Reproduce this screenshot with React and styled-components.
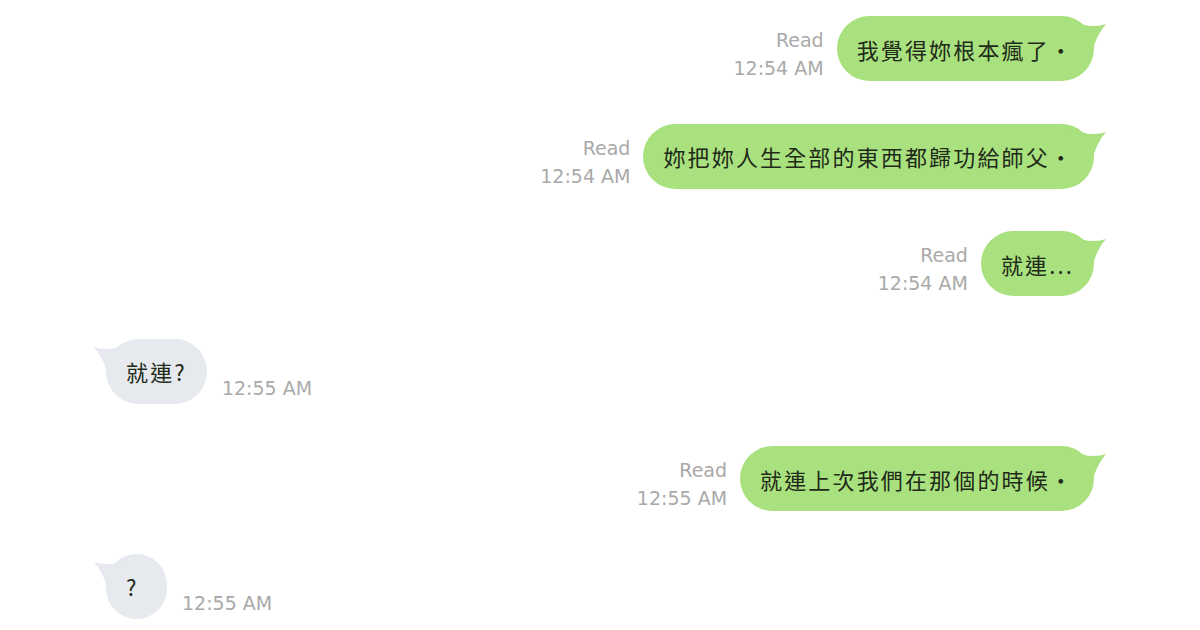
import React from "react";
import styled, { createGlobalStyle } from "styled-components";

const GlobalStyle = createGlobalStyle`
  html, body {
    margin: 0;
    padding: 0;
    background: #ffffff;
  }
  body {
    font-family: "Noto Sans CJK TC", "Noto Sans", sans-serif;
  }
`;

const messages = [
  { me: true, text: "我覺得妳根本瘋了・", time: "12:54 AM" },
  { me: true, text: "妳把妳人生全部的東西都歸功給師父・", time: "12:54 AM" },
  { me: true, text: "就連...", time: "12:54 AM" },
  { me: false, text: "就連?", time: "12:55 AM" },
  { me: true, text: "就連上次我們在那個的時候・", time: "12:55 AM" },
  { me: false, text: "?", time: "12:55 AM" },
];

function Tail({ color, flip }) {
  return (
    <TailSvg $flip={flip} width="44" height="40" viewBox="0 0 44 40">
      <path d="M2 1 Q 24 12 40 6 Q 30 17 25 38 L 2 38 Z" fill={color} />
    </TailSvg>
  );
}

export default function App() {
  return (
    <>
      <GlobalStyle />
      <Chat>
        {messages.map((m, i) => (
          <Row key={i} $me={m.me}>
            {m.me && (
              <Meta>
                <span>Read</span>
                <span>{m.time}</span>
              </Meta>
            )}
            <Bubble $me={m.me}>
              <Tail color={m.me ? "#a9e17f" : "#e6e9ee"} flip={!m.me} />
              <BubbleText>{m.text}</BubbleText>
            </Bubble>
            {!m.me && <Stamp>{m.time}</Stamp>}
          </Row>
        ))}
      </Chat>
    </>
  );
}

const Chat = styled.div`
  width: 1200px;
  height: 630px;
  box-sizing: border-box;
  padding: 16px 106px 0 106px;
  display: flex;
  flex-direction: column;
  gap: 42.6px;
  overflow: hidden;
`;

const Row = styled.div`
  display: flex;
  justify-content: ${(p) => (p.$me ? "flex-end" : "flex-start")};
  align-items: flex-end;
  gap: ${(p) => (p.$me ? "13px" : "15px")};
`;

const Meta = styled.div`
  display: flex;
  flex-direction: column;
  align-items: flex-end;
  font-family: "DejaVu Sans", "Liberation Sans", sans-serif;
  font-size: 19px;
  line-height: 28px;
  color: #a9a9a9;
  margin-bottom: -1px;
`;

const Stamp = styled.div`
  font-family: "DejaVu Sans", "Liberation Sans", sans-serif;
  font-size: 19px;
  line-height: 28px;
  color: #a9a9a9;
  margin-bottom: 2px;
`;

const Bubble = styled.div`
  position: relative;
  height: 65px;
  min-width: 61px;
  box-sizing: border-box;
  padding: 0 20px 0 20px;
  border-radius: 33px;
  background: ${(p) => (p.$me ? "#a9e17f" : "#e6e9ee")};
  display: flex;
  align-items: center;
  svg {
    ${(p) => (p.$me ? "right: -16px;" : "left: -16px;")}
  }
`;

const TailSvg = styled.svg`
  position: absolute;
  top: 2px;
  transform: ${(p) => (p.$flip ? "scaleX(-1)" : "none")};
`;

const BubbleText = styled.span`
  position: relative;
  font-size: 22px;
  letter-spacing: 2.15px;
  color: #1f2a18;
  white-space: nowrap;
`;
